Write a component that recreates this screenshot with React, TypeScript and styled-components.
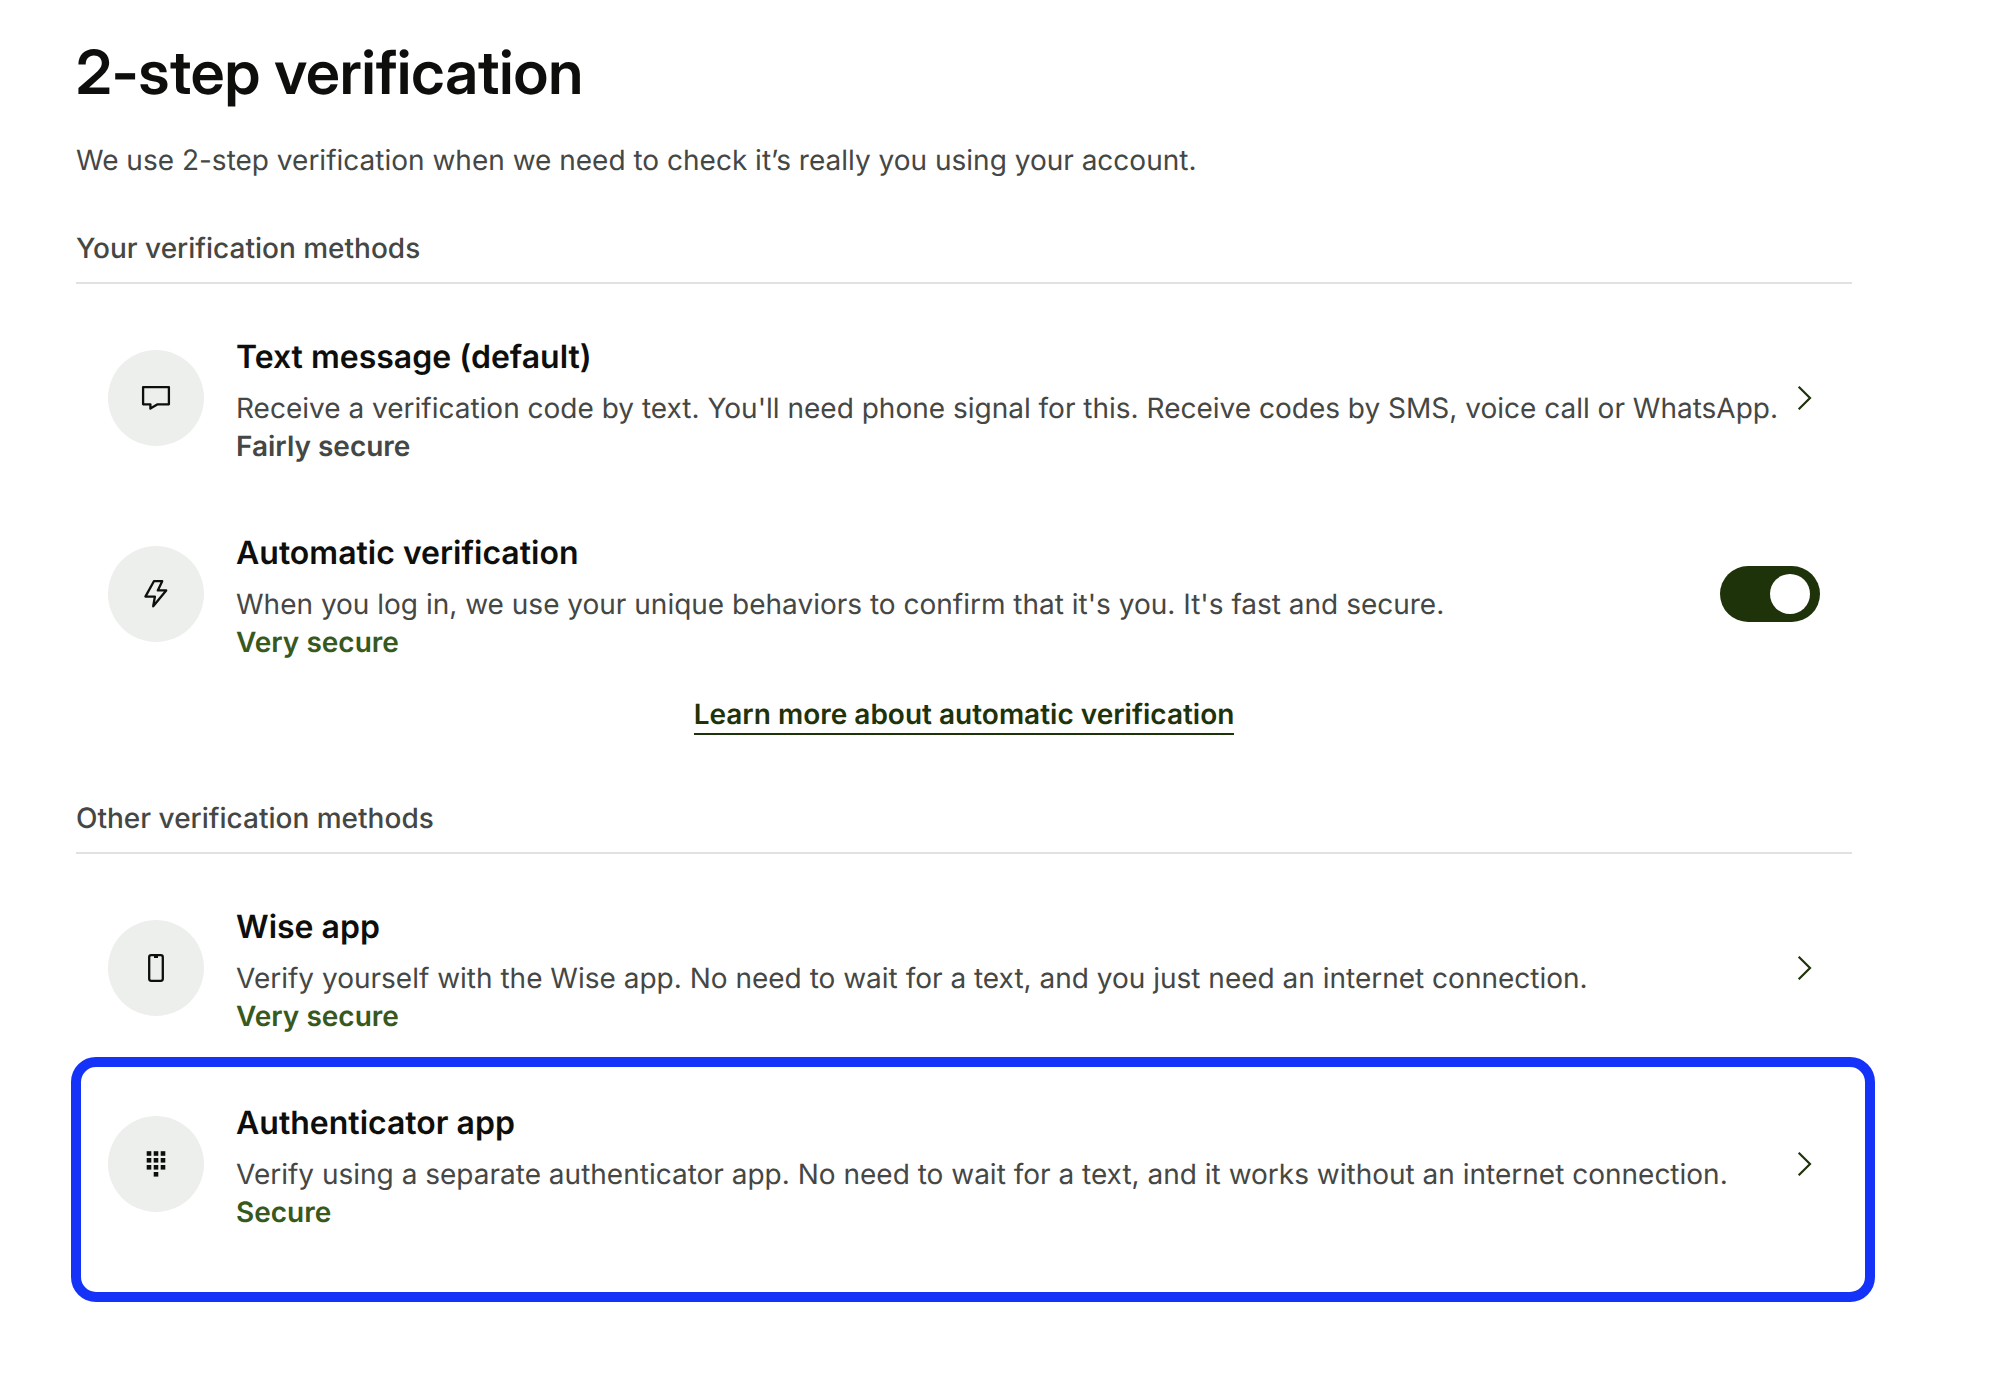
import React, { ReactNode, useState } from "react";
import styled, { createGlobalStyle } from "styled-components";

const GlobalStyle = createGlobalStyle`
  *, *::before, *::after { box-sizing: border-box; }
  body {
    margin: 0;
    background: #fff;
    color: #454745;
    font-family: Inter, "Liberation Sans", sans-serif;
    font-size: 28px;
    line-height: 44px;
    text-rendering: geometricPrecision;
  }
`;

const Page = styled.main`
  max-width: 1852px;
  padding: 38px 0 40px 76px;
`;

const Title = styled.h1`
  margin: 0 0 32px;
  color: #0e0f0c;
  font-family: "Inter Display", Inter, sans-serif;
  font-size: 61px;
  font-weight: 600;
  line-height: 68px;
`;

const Intro = styled.p`
  margin: 0;
`;

const Section = styled.section`
  margin-top: 44px;
`;

const SectionTitle = styled.h2`
  margin: 0 0 16px;
  padding-bottom: 12px;
  border-bottom: 2px solid #e1e1e0;
  font-size: 28px;
  font-weight: 500;
  line-height: 44px;
`;

const Methods = styled.ul`
  margin: 0;
  padding: 0;
  list-style: none;
`;

const Method = styled.li<{ $highlighted?: boolean }>`
  position: relative;

  &::after {
    content: ${(p) => (p.$highlighted ? '""' : "none")};
    position: absolute;
    inset: -9px -23px -40px -5px;
    border: 10px solid #1432f8;
    border-radius: 25px;
    pointer-events: none;
  }
`;

const rowLayout = `
  display: flex;
  align-items: center;
  width: 100%;
  min-height: 196px;
  padding: 24px 32px;
  border: 0;
  background: none;
  color: inherit;
  font: inherit;
  text-align: left;
  text-rendering: inherit;
  cursor: pointer;
`;

const RowButton = styled.button`
  ${rowLayout}
`;

const RowLabel = styled.label`
  ${rowLayout}
`;

const Avatar = styled.span`
  display: flex;
  flex: none;
  align-items: center;
  justify-content: center;
  width: 96px;
  height: 96px;
  margin-right: 32px;
  border-radius: 50%;
  background: #edefec;
  color: #0e0f0c;
`;

const Body = styled.span`
  display: flex;
  flex: 1;
  flex-direction: column;
  min-width: 0;
  padding-top: 2px;
  line-height: 38px;
`;

const Name = styled.span`
  margin-bottom: 8px;
  color: #0e0f0c;
  font-size: 32px;
  font-weight: 600;
  line-height: 48px;
`;

const Rating = styled.span<{ $good?: boolean }>`
  color: ${(p) => (p.$good ? "#37591e" : "#454745")};
  font-weight: 600;
`;

const ChevronIcon = styled.svg`
  flex: none;
  color: #1f330a;
`;

const Switch = styled.input`
  display: flex;
  flex: none;
  align-items: center;
  justify-content: flex-end;
  appearance: none;
  width: 100px;
  height: 56px;
  margin: 0;
  padding: 0 10px;
  border-radius: 28px;
  background: #1f330a;
  cursor: pointer;

  &::before {
    content: "";
    width: 40px;
    height: 40px;
    border-radius: 50%;
    background: #fff;
  }

  &:not(:checked) {
    justify-content: flex-start;
    background: #868685;
  }
`;

const More = styled.p`
  display: flex;
  justify-content: center;
  margin: 0;
  padding: 3px 0 17px;
`;

const MoreLink = styled.a`
  border-bottom: 2px solid #1f330a;
  color: #1f330a;
  font-weight: 600;
  line-height: 38px;
  text-decoration: none;
`;

const Icon = ({ children }: { children: ReactNode }) => (
  <svg width="32" height="32" viewBox="0 0 32 32" fill="none" stroke="currentColor" strokeWidth="2.3" aria-hidden="true">
    {children}
  </svg>
);

const MessageIcon = () => (
  <Icon>
    <path d="M3.1 5.1H28.9V22.3H17.6L10.4 26.6V22.3H3.1Z" strokeLinejoin="round" />
  </Icon>
);

const BoltIcon = () => (
  <Icon>
    <path d="M13.9 3.2H22.2L17.8 12.4H26.2L13.2 28.3L14.9 18.6H5.4Z" strokeLinejoin="round" />
  </Icon>
);

const PhoneIcon = () => (
  <Icon>
    <rect x="9.2" y="3.2" width="13.6" height="25.6" rx="2" />
    <path d="M14 3h4v3h-4z" fill="currentColor" stroke="none" />
  </Icon>
);

const KEYS = [
  [6.7, 3.2], [13.7, 3.2], [20.7, 3.2],
  [6.7, 10], [13.7, 10], [20.7, 10],
  [6.7, 17], [13.7, 17], [20.7, 17],
  [13.7, 24],
];

const KeypadIcon = () => (
  <Icon>
    {KEYS.map(([x, y]) => (
      <rect key={`${x}-${y}`} x={x} y={y} width="4.6" height="4.6" fill="currentColor" stroke="none" />
    ))}
  </Icon>
);

const Chevron = () => (
  <ChevronIcon width="32" height="32" viewBox="0 0 32 32" fill="none" stroke="currentColor" strokeWidth="2.2" aria-hidden="true">
    <path d="M10.7 4.7L22 16L10.7 27.3" />
  </ChevronIcon>
);

interface ContentProps {
  icon: ReactNode;
  name: string;
  description: string;
  rating: string;
  good?: boolean;
}

const MethodContent = ({ icon, name, description, rating, good }: ContentProps) => (
  <>
    <Avatar>{icon}</Avatar>
    <Body>
      <Name>{name}</Name>
      <span>{description}</span>
      <Rating $good={good}>{rating}</Rating>
    </Body>
  </>
);

export default function App() {
  const [automatic, setAutomatic] = useState(true);

  return (
    <>
      <GlobalStyle />
      <Page>
        <Title>2-step verification</Title>
        <Intro>We use 2-step verification when we need to check it’s really you using your account.</Intro>

        <Section>
          <SectionTitle>Your verification methods</SectionTitle>
          <Methods>
            <Method>
              <RowButton type="button">
                <MethodContent
                  icon={<MessageIcon />}
                  name="Text message (default)"
                  description="Receive a verification code by text. You'll need phone signal for this. Receive codes by SMS, voice call or WhatsApp."
                  rating="Fairly secure"
                />
                <Chevron />
              </RowButton>
            </Method>
            <Method>
              <RowLabel htmlFor="automatic">
                <MethodContent
                  icon={<BoltIcon />}
                  name="Automatic verification"
                  description="When you log in, we use your unique behaviors to confirm that it's you. It's fast and secure."
                  rating="Very secure"
                  good
                />
                <Switch
                  id="automatic"
                  type="checkbox"
                  role="switch"
                  checked={automatic}
                  onChange={(e) => setAutomatic(e.target.checked)}
                />
              </RowLabel>
            </Method>
          </Methods>
          <More>
            <MoreLink href="#automatic-verification">Learn more about automatic verification</MoreLink>
          </More>
        </Section>

        <Section>
          <SectionTitle>Other verification methods</SectionTitle>
          <Methods>
            <Method>
              <RowButton type="button">
                <MethodContent
                  icon={<PhoneIcon />}
                  name="Wise app"
                  description="Verify yourself with the Wise app. No need to wait for a text, and you just need an internet connection."
                  rating="Very secure"
                  good
                />
                <Chevron />
              </RowButton>
            </Method>
            <Method $highlighted>
              <RowButton type="button">
                <MethodContent
                  icon={<KeypadIcon />}
                  name="Authenticator app"
                  description="Verify using a separate authenticator app. No need to wait for a text, and it works without an internet connection."
                  rating="Secure"
                  good
                />
                <Chevron />
              </RowButton>
            </Method>
          </Methods>
        </Section>
      </Page>
    </>
  );
}
